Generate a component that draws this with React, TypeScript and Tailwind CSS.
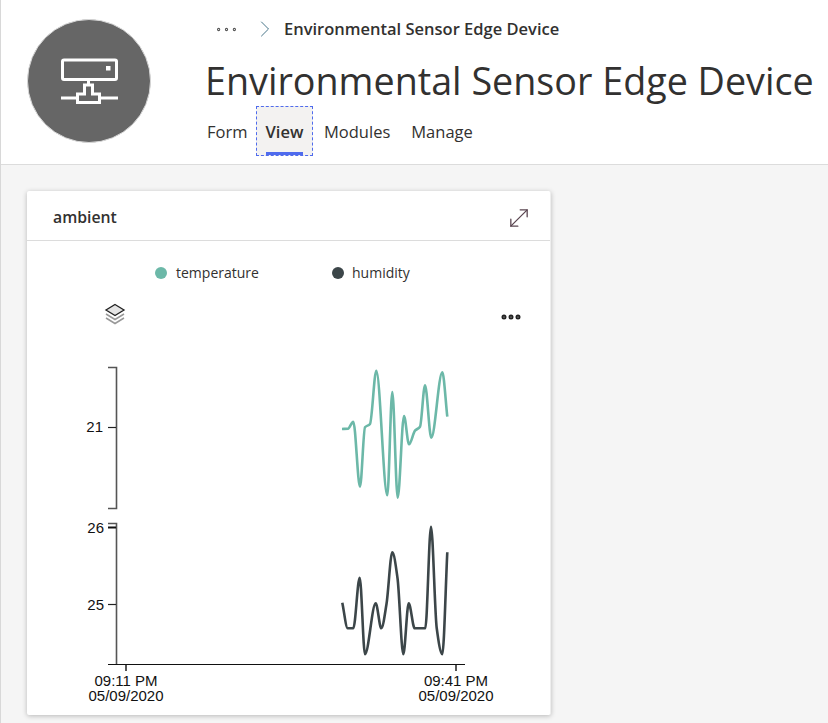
import { Ellipsis, ChevronRight, MoveDiagonal } from "lucide-react";

type Point = [number, number];

const temperature: Point[] = [
  [342, 429], [348, 428.7], [353.3, 421.7], [360, 486.7], [365, 427.3], [370, 424],
  [376.3, 370.7], [387.3, 495.3], [392.3, 392], [397.7, 497.7], [404, 416], [409, 444.3],
  [415, 430.7], [420, 426.7], [425, 385.3], [431.3, 437.7], [442.3, 372.3], [447.3, 416.7],
];

const humidity: Point[] = [
  [342.3, 602.7], [347.7, 628.3], [353.3, 628.3], [359.7, 577.7], [365, 654.3], [375.7, 603.3],
  [381.3, 628.3], [386.5, 604], [392.3, 552.3], [397.5, 578], [403.3, 654.3], [408.7, 603.3],
  [414.7, 628.3], [425.3, 628.3], [431, 526.7], [436.7, 628], [442.3, 654.3], [447.3, 552.3],
];

// monotone x curve, same look as the chart's smoothed lines
function monotonePath(pts: Point[]): string {
  const slopes = pts.slice(1).map((p, i) => (p[1] - pts[i][1]) / (p[0] - pts[i][0]));
  const tangents = pts.map((_, i) => {
    if (i === 0) return slopes[0];
    if (i === pts.length - 1) return slopes[i - 1];
    if (slopes[i - 1] * slopes[i] <= 0) return 0;
    return (2 * slopes[i - 1] * slopes[i]) / (slopes[i - 1] + slopes[i]);
  });
  let d = `M${pts[0][0]},${pts[0][1]}`;
  for (let i = 0; i < pts.length - 1; i++) {
    const dx = (pts[i + 1][0] - pts[i][0]) / 3;
    d += `C${pts[i][0] + dx},${pts[i][1] + tangents[i] * dx} ${pts[i + 1][0] - dx},${pts[i + 1][1] - tangents[i + 1] * dx} ${pts[i + 1][0]},${pts[i + 1][1]}`;
  }
  return d;
}

function DeviceIcon() {
  return (
    <div className="flex h-[124px] w-[124px] items-center justify-center rounded-full border border-[#d8d8d8] bg-[#666666]">
      <svg width="58" height="46" viewBox="60 60 58 46" fill="none" stroke="white" strokeWidth="3">
        <rect x="62.5" y="62" width="54" height="19.5" rx="1.5" />
        <rect x="106" y="68" width="4.5" height="4.5" fill="white" stroke="none" />
        <path d="M61 100H77M100 100H118M77.5 104.5H99.5V96H92.5V87H84.5V96H77.5Z" />
        <path d="M88.5 82V87" />
      </svg>
    </div>
  );
}

function LayersIcon() {
  return (
    <svg width="24" height="24" viewBox="0 0 24 24" fill="none">
      <path d="M12 2.5L21 8L12 13.5L3 8Z" fill="#e4e4e4" stroke="#222" strokeWidth="1.3" />
      <path d="M3 12L12 17.5L21 12" stroke="#999" strokeWidth="1.5" />
      <path d="M3 16L12 21.5L21 16" stroke="#999" strokeWidth="1.5" />
    </svg>
  );
}

function Chart() {
  const axisText = "font-['Liberation_Sans',Arial,sans-serif] text-[15px]";
  return (
    <svg width="523" height="386" viewBox="27 329 523 386" className="block">
      {/* top axis */}
      <path d="M108 367.5H116.5V508.5H108" fill="none" stroke="#555" strokeWidth="1.6" />
      <path d="M108 427.5H116" stroke="#222" strokeWidth="1.2" />
      <text x="103" y="432" textAnchor="end" fill="#111" className={axisText}>21</text>
      {/* bottom axis */}
      <path d="M108 523.5H116.5V664.5" fill="none" stroke="#555" strokeWidth="1.6" />
      <path d="M108 527.5H116" stroke="#111" strokeWidth="2" />
      <path d="M108 604.5H116" stroke="#222" strokeWidth="1.2" />
      <text x="104" y="533" textAnchor="end" fill="#111" className={axisText}>26</text>
      <text x="104" y="610" textAnchor="end" fill="#111" className={axisText}>25</text>
      {/* time axis */}
      <path d="M108 664.5H465" stroke="#111" strokeWidth="1.2" />
      <path d="M126 665V671M456 665V671" stroke="#111" strokeWidth="1.4" />
      <text x="126" y="686" textAnchor="middle" fill="#111" className={axisText}>09:11 PM</text>
      <text x="126" y="701" textAnchor="middle" fill="#111" className={axisText}>05/09/2020</text>
      <text x="456" y="686" textAnchor="middle" fill="#111" className={axisText}>09:41 PM</text>
      <text x="456" y="701" textAnchor="middle" fill="#111" className={axisText}>05/09/2020</text>
      <path d={monotonePath(temperature)} fill="none" stroke="#6cb8a8" strokeWidth="2.6" />
      <path d={monotonePath(humidity)} fill="none" stroke="#3c4649" strokeWidth="2.6" />
    </svg>
  );
}

export default function App() {
  return (
    <div className="min-h-[723px] border-l border-[#d8d8d8] bg-[#f5f5f5] font-['Open_Sans',sans-serif] text-[#323130]">
      <header className="flex h-[165px] border-b border-[#dcdcdc] bg-white">
        <div className="pl-[26px] pt-[19px]">
          <DeviceIcon />
        </div>
        <div className="pl-[54px]">
          <div className="flex h-[58px] items-center pl-[8px]">
            <Ellipsis size={27} strokeWidth={0.9} className="text-[#555]" />
            <ChevronRight size={28} strokeWidth={0.8} className="ml-[11px] text-[#3a6a80]" />
            <span className="ml-[5px] text-[16.5px] font-semibold">Environmental Sensor Edge Device</span>
          </div>
          <h1 className="-mt-[2px] h-[50px] whitespace-nowrap text-[37.7px] leading-[50px]">
            Environmental Sensor Edge Device
          </h1>
          <nav className="flex items-start text-[16.5px]">
            <span className="w-[51px] pl-[2px] pt-[14px]">Form</span>
            <span className="relative h-[50px] w-[57px] border border-dashed border-[#4f6bed] bg-[#f3f2f1] pt-[13px] text-center font-semibold">
              View
              <span className="absolute bottom-0 left-[9px] h-[3px] w-[37px] bg-[#4f6bed]" />
            </span>
            <span className="ml-[11px] pt-[14px]">Modules</span>
            <span className="ml-[21px] pt-[14px]">Manage</span>
          </nav>
        </div>
      </header>
      <main className="px-[26px] py-[26px]">
        <section className="w-[524px] rounded-[2px] border-r border-[#eeeeee] bg-white shadow-[0_1px_5px_rgba(0,0,0,0.25)]">
          <div className="flex h-[50px] items-center justify-between border-b border-[#dcdcdc] px-[26px] pr-[17px] pt-[4px]">
            <span className="text-[15.8px] font-semibold text-[#323130]">ambient</span>
            <MoveDiagonal size={28} strokeWidth={1.1} className="text-[#5a4550]" />
          </div>
          <div className="flex items-center pl-[128px] pt-[21px] text-[14px]">
            <span className="h-3 w-3 rounded-full bg-[#6cb8a8]" />
            <span className="ml-[9px] w-[156px]">temperature</span>
            <span className="h-3 w-3 rounded-full bg-[#3c4649]" />
            <span className="ml-[8px]">humidity</span>
          </div>
          <div className="flex items-start justify-between pl-[76px] pr-[27px] pt-[19px]">
            <LayersIcon />
            <Ellipsis size={24} strokeWidth={3} className="mt-[3px] text-[#222]" />
          </div>
          <Chart />
        </section>
      </main>
    </div>
  );
}
